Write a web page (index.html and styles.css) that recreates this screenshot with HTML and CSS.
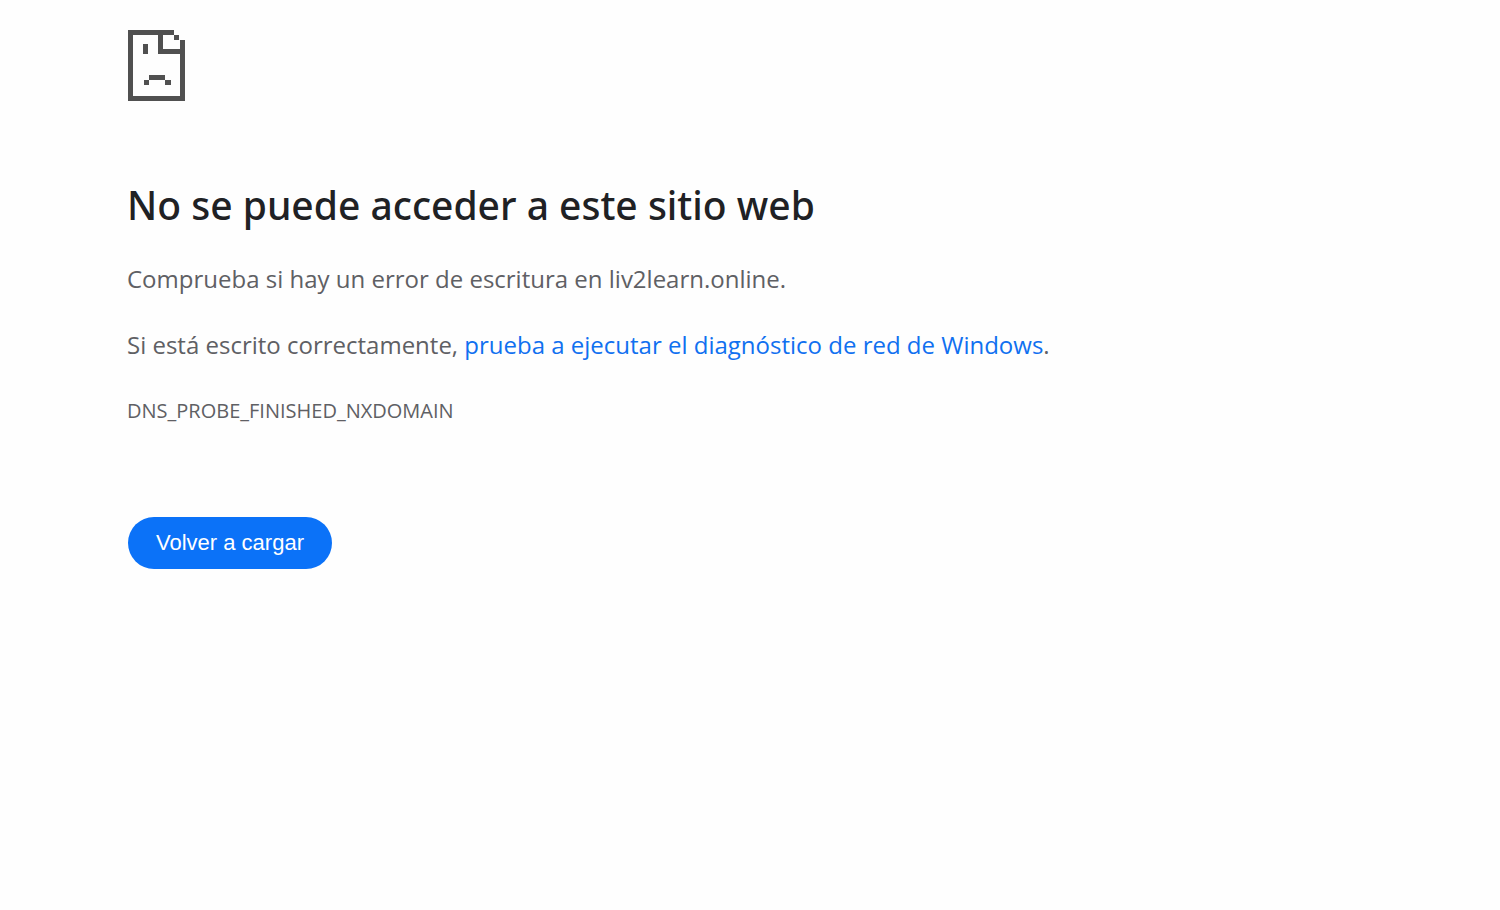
FILE: index.html
```
<!DOCTYPE html>
<html lang="es">
  <head>
    <meta charset="UTF-8" />
    <meta name="viewport" content="width=device-width, initial-scale=1.0" />
    <title>liv2learn.online</title>
    <link rel="stylesheet" href="styles.css">
  </head>
  <body>
    <main class="error-page">
      <!-- página con cara triste -->
      <svg class="error-icon" viewBox="0 0 57 71" aria-hidden="true">
        <path d="M0 0H46V5H35V19H52V10H57V71H0ZM5 5V66H52V24H30V5Z" fill-rule="evenodd" />
        <path d="M46 5H51V10H46ZM15 14H20V24H15ZM21 45H37V50H21ZM16 50H21V55H16ZM37 50H43V55H37Z" />
      </svg>

      <h1>No se puede acceder a este sitio web</h1>
      <p>Comprueba si hay un error de escritura en liv2learn.online.</p>
      <p>
        Si está escrito correctamente,
        <a href="#diagnostico">prueba a ejecutar el diagnóstico de red de Windows</a>.
      </p>
      <div class="error-code">DNS_PROBE_FINISHED_NXDOMAIN</div>

      <button class="reload-btn" type="button" onclick="location.reload()">Volver a cargar</button>
    </main>
  </body>
</html>
```

FILE: styles.css
```
* {
  margin: 0;
  padding: 0;
  box-sizing: border-box;
}

body {
  background-color: #fefefe;
  color: #5f6064;
  font-family: "Open Sans", "Noto Sans", sans-serif;
}

.error-page {
  padding: 30px 127px;
}

.error-icon {
  display: block;
  width: 57px;
  height: 71px;
  margin-left: 1px;
  fill: #505050;
}

h1 {
  margin-top: 78px;
  color: #202124;
  font-family: "Noto Sans", sans-serif;
  font-size: 39px;
  font-weight: 500;
  line-height: 52px;
}

p {
  margin-top: 30px;
  font-size: 24px;
  line-height: 36px;
}

a {
  color: #1070f0;
  text-decoration: none;
}

.error-code {
  margin-top: 30px;
  font-size: 20px;
  line-height: 36px;
}

.reload-btn {
  height: 52px;
  margin-top: 88px;
  margin-left: 1px;
  padding: 0 28px;
  border: none;
  border-radius: 26px;
  background-color: #0b72f8;
  color: white;
  font-family: "Liberation Sans", Arial, sans-serif;
  font-size: 22px;
  cursor: pointer;
}
```
